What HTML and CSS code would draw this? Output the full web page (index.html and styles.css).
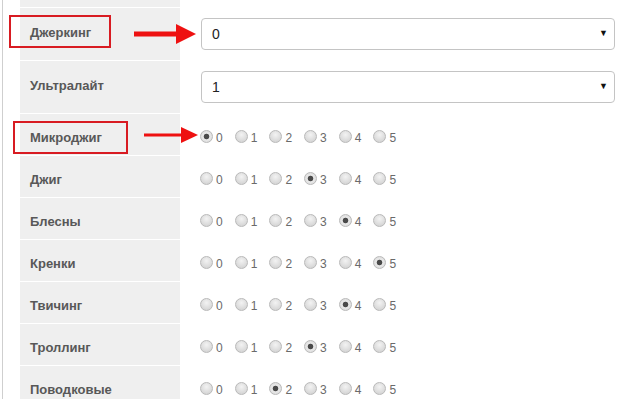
FILE: index.html
```html
<!DOCTYPE html>
<html lang="ru">
<head>
  <meta charset="UTF-8" />
  <title>Техники ловли</title>
  <link rel="stylesheet" href="styles.css">
</head>
<body>
  <div class="form">
    <div class="row row-cut">
      <div class="label"></div>
      <div class="field"></div>
    </div>

    <!-- selects -->
    <div class="row row-select">
      <div class="label">Джеркинг</div>
      <div class="field">
        <span class="select">
          <select><option>0</option><option>1</option><option>2</option><option>3</option><option>4</option><option>5</option></select>
        </span>
      </div>
      <span class="mark mark-1"></span>
      <svg class="arrow arrow-1" viewBox="0 0 62 20" aria-hidden="true">
        <rect x="0" y="7.5" width="44" height="5" fill="#ee1111"/>
        <polygon points="42,0 62,10 42,20" fill="#ee1111"/>
      </svg>
    </div>

    <div class="row row-select">
      <div class="label">Ультралайт</div>
      <div class="field">
        <span class="select">
          <select><option>0</option><option selected>1</option><option>2</option><option>3</option><option>4</option><option>5</option></select>
        </span>
      </div>
    </div>

    <!-- radio rows -->
    <div class="row">
      <div class="label">Микроджиг</div>
      <div class="field">
        <label class="opt"><input type="radio" name="r1" checked><span>0</span></label>
        <label class="opt"><input type="radio" name="r1"><span>1</span></label>
        <label class="opt"><input type="radio" name="r1"><span>2</span></label>
        <label class="opt"><input type="radio" name="r1"><span>3</span></label>
        <label class="opt"><input type="radio" name="r1"><span>4</span></label>
        <label class="opt"><input type="radio" name="r1"><span>5</span></label>
      </div>
      <span class="mark mark-2"></span>
      <svg class="arrow arrow-2" viewBox="0 0 54 16" aria-hidden="true">
        <rect x="0" y="6.5" width="38" height="3" fill="#ee1111"/>
        <polygon points="37,0 54,8 37,16" fill="#ee1111"/>
      </svg>
    </div>

    <div class="row">
      <div class="label">Джиг</div>
      <div class="field">
        <label class="opt"><input type="radio" name="r2"><span>0</span></label>
        <label class="opt"><input type="radio" name="r2"><span>1</span></label>
        <label class="opt"><input type="radio" name="r2"><span>2</span></label>
        <label class="opt"><input type="radio" name="r2" checked><span>3</span></label>
        <label class="opt"><input type="radio" name="r2"><span>4</span></label>
        <label class="opt"><input type="radio" name="r2"><span>5</span></label>
      </div>
    </div>

    <div class="row">
      <div class="label">Блесны</div>
      <div class="field">
        <label class="opt"><input type="radio" name="r3"><span>0</span></label>
        <label class="opt"><input type="radio" name="r3"><span>1</span></label>
        <label class="opt"><input type="radio" name="r3"><span>2</span></label>
        <label class="opt"><input type="radio" name="r3"><span>3</span></label>
        <label class="opt"><input type="radio" name="r3" checked><span>4</span></label>
        <label class="opt"><input type="radio" name="r3"><span>5</span></label>
      </div>
    </div>

    <div class="row">
      <div class="label">Кренки</div>
      <div class="field">
        <label class="opt"><input type="radio" name="r4"><span>0</span></label>
        <label class="opt"><input type="radio" name="r4"><span>1</span></label>
        <label class="opt"><input type="radio" name="r4"><span>2</span></label>
        <label class="opt"><input type="radio" name="r4"><span>3</span></label>
        <label class="opt"><input type="radio" name="r4"><span>4</span></label>
        <label class="opt"><input type="radio" name="r4" checked><span>5</span></label>
      </div>
    </div>

    <div class="row">
      <div class="label">Твичинг</div>
      <div class="field">
        <label class="opt"><input type="radio" name="r5"><span>0</span></label>
        <label class="opt"><input type="radio" name="r5"><span>1</span></label>
        <label class="opt"><input type="radio" name="r5"><span>2</span></label>
        <label class="opt"><input type="radio" name="r5"><span>3</span></label>
        <label class="opt"><input type="radio" name="r5" checked><span>4</span></label>
        <label class="opt"><input type="radio" name="r5"><span>5</span></label>
      </div>
    </div>

    <div class="row">
      <div class="label">Троллинг</div>
      <div class="field">
        <label class="opt"><input type="radio" name="r6"><span>0</span></label>
        <label class="opt"><input type="radio" name="r6"><span>1</span></label>
        <label class="opt"><input type="radio" name="r6"><span>2</span></label>
        <label class="opt"><input type="radio" name="r6" checked><span>3</span></label>
        <label class="opt"><input type="radio" name="r6"><span>4</span></label>
        <label class="opt"><input type="radio" name="r6"><span>5</span></label>
      </div>
    </div>

    <div class="row">
      <div class="label">Поводковые</div>
      <div class="field">
        <label class="opt"><input type="radio" name="r7"><span>0</span></label>
        <label class="opt"><input type="radio" name="r7"><span>1</span></label>
        <label class="opt"><input type="radio" name="r7" checked><span>2</span></label>
        <label class="opt"><input type="radio" name="r7"><span>3</span></label>
        <label class="opt"><input type="radio" name="r7"><span>4</span></label>
        <label class="opt"><input type="radio" name="r7"><span>5</span></label>
      </div>
    </div>
  </div>
</body>
</html>
```

FILE: styles.css
```css
html, body {
  margin: 0;
  background: #fff;
  font-family: "Liberation Sans", Arial, sans-serif;
  overflow: hidden;
}

.form {
  margin-left: 2px;
  border-left: 1px solid #cfcfcf;
  padding-left: 17px;
  min-height: 420px;
}

.row {
  position: relative;
  display: flex;
  box-sizing: border-box;
  height: 42px;
  border-top: 1px solid #fff;
}

.row-cut {
  height: 7px;
  border-top: none;
}

.row-select {
  height: 53px;
}

.label {
  width: 160px;
  flex: none;
  box-sizing: border-box;
  padding: 5px 0 0 10px;
  background: #efefef;
  display: flex;
  align-items: center;
  font-size: 13px;
  font-weight: bold;
  color: #585858;
}

.row-select .label {
  padding-top: 0;
  padding-bottom: 4px;
}

.field {
  flex: 1;
  display: flex;
  align-items: center;
  padding: 0 17px 0 20px;
}

/* select box */
.select {
  position: relative;
  flex: 1;
  margin-left: 1px;
}

.select select {
  appearance: none;
  -webkit-appearance: none;
  width: 100%;
  height: 32px;
  box-sizing: border-box;
  border: 1px solid #c4c4c4;
  border-radius: 4px;
  background: #fff;
  padding: 0 10px;
  font-family: inherit;
  font-size: 14px;
  color: #222;
}

.select::after {
  content: "\25BC";
  position: absolute;
  right: 7px;
  top: 10px;
  font-size: 9px;
  color: #111;
  pointer-events: none;
}

/* radio options */
.opt {
  display: inline-flex;
  align-items: center;
  margin-right: 12px;
  font-size: 12px;
  color: #6a6a6a;
  padding-top: 3px;
}

.opt input {
  appearance: none;
  -webkit-appearance: none;
  width: 13px;
  height: 13px;
  margin: 0 3px 0 0;
  border: 1px solid #b9b9b9;
  border-radius: 50%;
  box-sizing: border-box;
  background: radial-gradient(circle at 50% 35%, #f3f3f3 0, #dcdcdc 60%, #cdcdcd 100%);
}

.opt input:checked {
  background: radial-gradient(circle, #4a4a4a 0, #4a4a4a 2.4px, #e9e9e9 3.2px, #d6d6d6 100%);
}

.opt span {
  margin-top: 3px;
}

/* red annotations (rows start at x=20) */
.mark {
  position: absolute;
  border: 2px solid #d81b22;
  box-sizing: border-box;
}

.mark-1 {
  left: -11px;
  top: 7px;
  width: 102px;
  height: 33px;
}

.mark-2 {
  left: -7px;
  top: 7px;
  width: 115px;
  height: 33px;
}

.arrow {
  position: absolute;
}

.arrow-1 {
  left: 114px;
  top: 16px;
  width: 62px;
  height: 20px;
}

.arrow-2 {
  left: 124px;
  top: 13px;
  width: 54px;
  height: 16px;
}
```
